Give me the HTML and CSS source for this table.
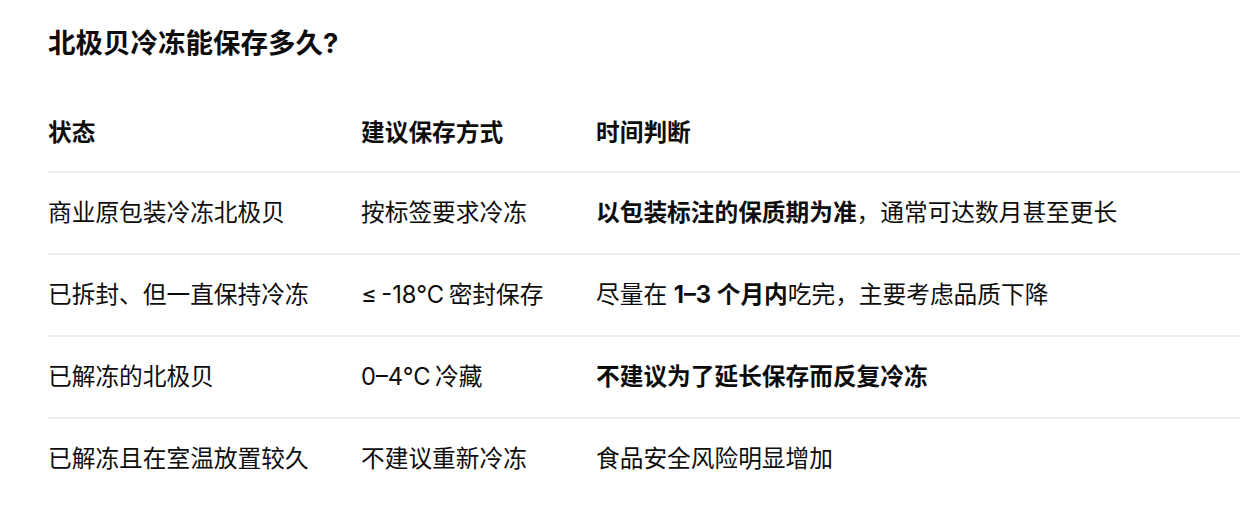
FILE: index.html
```html
<!DOCTYPE html>
<html lang="zh-CN">
<head>
<meta charset="utf-8">
<title>北极贝冷冻能保存多久?</title>
<link rel="stylesheet" href="styles.css">
</head>
<body>
<main class="page">
  <h1 class="title">北极贝冷冻能保存多久?</h1>
  <div class="table">
    <div class="row head">
      <div class="cell">状态</div>
      <div class="cell">建议保存方式</div>
      <div class="cell">时间判断</div>
    </div>
    <div class="row">
      <div class="cell">商业原包装冷冻北极贝</div>
      <div class="cell">按标签要求冷冻</div>
      <div class="cell"><strong>以包装标注的保质期为准</strong>，通常可达数月甚至更长</div>
    </div>
    <div class="row">
      <div class="cell">已拆封、但一直保持冷冻</div>
      <div class="cell tight">≤ -18°C 密封保存</div>
      <div class="cell">尽量在 <strong>1–3 个月内</strong>吃完，主要考虑品质下降</div>
    </div>
    <div class="row">
      <div class="cell">已解冻的北极贝</div>
      <div class="cell tight">0–4°C 冷藏</div>
      <div class="cell"><strong>不建议为了延长保存而反复冷冻</strong></div>
    </div>
    <div class="row last">
      <div class="cell">已解冻且在室温放置较久</div>
      <div class="cell">不建议重新冷冻</div>
      <div class="cell">食品安全风险明显增加</div>
    </div>
  </div>
</main>
</body>
</html>
```
FILE: styles.css
```css
html, body {
  margin: 0;
  padding: 0;
  background: #ffffff;
}
body {
  font-family: Inter, "Noto Sans CJK SC", sans-serif;
  color: #0d0d0d;
}
.page {
  padding: 24px 0 0 48px;
}
.title {
  margin: 0 0 31px 0;
  font-size: 27.5px;
  line-height: 38px;
  font-weight: 700;
}
.table {
  display: flex;
  flex-direction: column;
}
.row {
  display: grid;
  grid-template-columns: 313px 235px 1fr;
  border-bottom: 2px solid #ececec;
  font-size: 23.7px;
  line-height: 36px;
}
.row .cell {
  padding: 22px 0 22px 0;
  white-space: nowrap;
}
.row .cell.tight {
  word-spacing: -2px;
}
.row.head .cell {
  font-weight: 700;
  padding: 22px 0 20px 0;
}
.row.last {
  border-bottom: none;
}
strong {
  font-weight: 700;
}
```
